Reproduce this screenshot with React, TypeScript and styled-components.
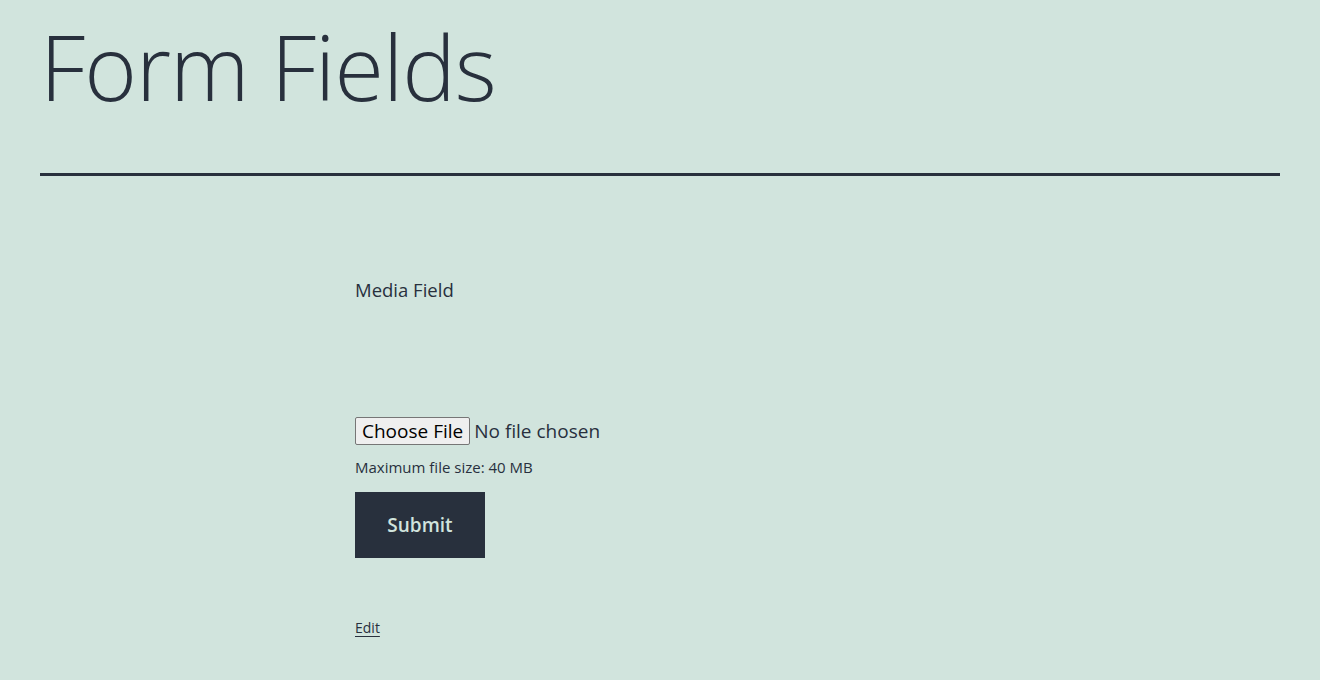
import React from 'react';
import styled, { createGlobalStyle } from 'styled-components';

const GlobalStyle = createGlobalStyle`
  html, body {
    margin: 0;
    padding: 0;
    background: #d1e4dd;
    color: #28303d;
    font-family: "Open Sans", "Liberation Sans", sans-serif;
  }
`;

const Page = styled.div`
  min-height: 680px;
  display: flex;
  flex-direction: column;
`;

const Header = styled.header`
  padding: 0 40px;
`;

const Title = styled.h1`
  margin: 0;
  padding-top: 17px;
  font-size: 90px;
  font-weight: 300;
  line-height: 1.1;
  letter-spacing: -1px;
  color: #28303d;
`;

const Divider = styled.hr`
  margin: 57px 0 0;
  border: 0;
  height: 3px;
  background: #28303d;
`;

const Content = styled.main`
  width: 610px;
  margin: 0 auto;
  padding-top: 101px;
  display: flex;
  flex-direction: column;
  align-items: flex-start;
`;

const Label = styled.label`
  font-size: 18.5px;
  line-height: 1.4;
`;

const FileInput = styled.input`
  margin-top: 114px;
  font-family: inherit;
  font-size: 19px;
  color: #28303d;

  &::file-selector-button {
    font-family: inherit;
    font-size: 19px;
    color: #000;
    background: #efefef;
    border: 1px solid #767676;
    border-radius: 2px;
    padding: 0 6px;
    margin-right: 4px;
    height: 28px;
  }
`;

const Hint = styled.p`
  margin: 12px 0 0;
  font-size: 15px;
`;

const SubmitButton = styled.button`
  margin-top: 15px;
  width: 130px;
  height: 66px;
  border: 0;
  background: #28303d;
  color: #d1e4dd;
  font-family: inherit;
  font-size: 19px;
  font-weight: 600;
  cursor: pointer;
`;

const EditLink = styled.a`
  margin-top: 60px;
  font-size: 14px;
  color: #28303d;
  text-decoration: underline;
  text-underline-offset: 3px;
`;

export default function App() {
  return (
    <Page>
      <GlobalStyle />
      <Header>
        <Title>Form Fields</Title>
        <Divider />
      </Header>
      <Content>
        <Label htmlFor="media">Media Field</Label>
        <FileInput id="media" type="file" />
        <Hint>Maximum file size: 40 MB</Hint>
        <SubmitButton type="button">Submit</SubmitButton>
        <EditLink href="#">Edit</EditLink>
      </Content>
    </Page>
  );
}
